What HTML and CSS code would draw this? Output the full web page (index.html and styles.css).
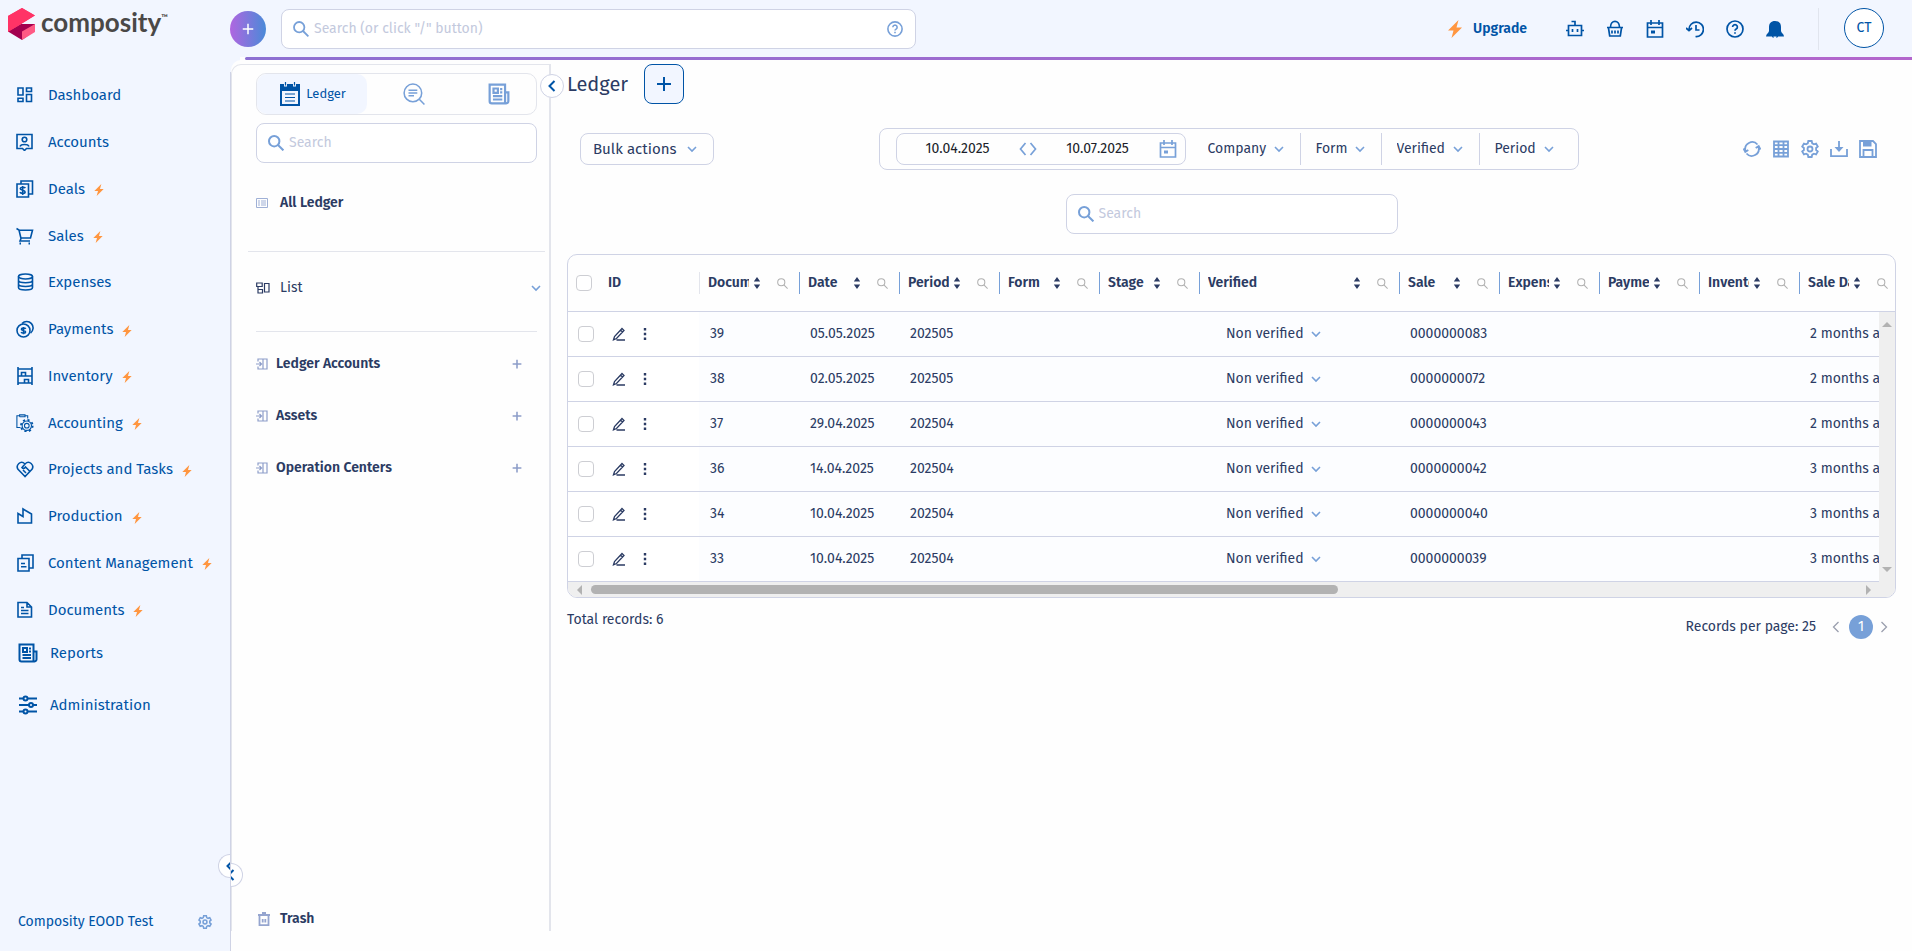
FILE: index.html
```html
<!DOCTYPE html>
<html lang="en">
<head>
    <meta charset="UTF-8">
    <meta name="viewport" content="width=device-width, initial-scale=1.0">
    <title>Ledger - Composity</title>
    <link rel="stylesheet" href="styles.css">
</head>
<body>
    <!-- Icon sprite -->
    <svg class="sprite" aria-hidden="true">
        <symbol id="i-search" viewBox="0 0 16 16"><circle cx="6.2" cy="6.2" r="5.2"/><path d="M10 10l5.4 5.4"/></symbol>
        <symbol id="i-plus" viewBox="0 0 16 16"><path d="M8 1v14M1 8h14"/></symbol>
        <symbol id="i-left" viewBox="0 0 16 16"><path d="M10.5 3L5.5 8l5 5"/></symbol>
        <symbol id="i-right" viewBox="0 0 16 16"><path d="M5.5 3l5 5-5 5"/></symbol>
        <symbol id="i-bolt" viewBox="0 0 16 18"><path d="M11.5 0L1 10.5h5.5L4.5 18 15 7.5H9.5z" fill="#ff9640" stroke="none"/></symbol>
        <symbol id="i-help" viewBox="0 0 18 18"><circle cx="9" cy="9" r="8"/><path d="M6.6 7a2.4 2.4 0 1 1 3.6 2.1c-.9.5-1.2.8-1.2 1.7M9 12.2v1.6"/></symbol>
        <symbol id="i-dashboard" viewBox="0 0 18 18"><path d="M2 2h5v7H2zM10.500 2h5v3.500h-5zM10.500 8.500h5v7h-5zM2 12.200h5v3.300H2z"/></symbol>
        <symbol id="i-accounts" viewBox="0 0 18 18"><path d="M1 1.500h15v14h-5.500l-2 2-2-2H1z"/><circle cx="8.500" cy="6.500" r="2.300"/><path d="M4 13.500c1-2.600 8-2.600 9 0"/></symbol>
        <symbol id="i-deals" viewBox="0 0 18 18"><path d="M5 4V1h11.500v13H13M1 4h11.500v13H1z"/><path d="M9.300 8.200c-.7-1.400-5-1.300-5 .6 0 1.900 4.800 1.200 4.800 3.200 0 1.900-4.400 1.800-5.200.2M6.700 6v9"/></symbol>
        <symbol id="i-cart" viewBox="0 0 18 18"><path d="M.500 1.500l2.500 1.500 2 8.500-1 2.500H14M3.200 3.300H16.500l-2 7.700H4.900"/><path d="M3.500 16.500H5M12.500 16.500H14" stroke-width="2"/></symbol>
        <symbol id="i-coins" viewBox="0 0 18 18"><ellipse cx="9.500" cy="3.500" rx="7" ry="2.500"/><path d="M2.500 3.500v11c0 3.300 14 3.300 14 0v-11M2.500 7.200c0 3.300 14 3.300 14 0M2.500 11c0 3.300 14 3.300 14 0"/></symbol>
        <symbol id="i-payments" viewBox="0 0 18 18"><circle cx="7.500" cy="10.500" r="6.500"/><path d="M6 3.500A6.400 6.400 0 1 1 14.500 13M9.700 8.800c-.6-1.200-4.300-1.100-4.300.4 0 1.600 4.200 1.100 4.200 2.700s-3.800 1.500-4.500.2M7.500 7v7.200"/></symbol>
        <symbol id="i-inventory" viewBox="0 0 18 18"><path d="M2 0v18M16 0v18M2 2h14M2 9h14M2 16h14M5.500 9V5.500h4V9M8.500 16v-3.500h4V16"/></symbol>
        <symbol id="i-gear" viewBox="0 0 18 18"><path d="M7.300 1h3.400l.5 2.300 1.700 1 2.200-.8 1.700 3L15.100 8v2l1.700 1.500-1.700 3-2.200-.8-1.700 1-.5 2.300H7.300l-.5-2.300-1.700-1-2.200.8-1.700-3L2.900 10V8L1.200 6.500l1.700-3 2.200.8 1.700-1z"/><circle cx="9" cy="9" r="2.500"/></symbol>
        <symbol id="i-accounting" viewBox="0 0 20 20"><path d="M5 15H1V2h3M4 3V1h6v2H4M10 2h3v3"/><circle cx="12" cy="13" r="5.200"/><circle cx="12" cy="13" r="2.600"/><circle cx="12" cy="13" r="6.500" stroke-width="2" stroke-dasharray="2.400 2.700"/></symbol>
        <symbol id="i-heart" viewBox="0 0 18 18"><path d="M9 16.500L2 9.200C-.5 5.500 4.500-.5 9 4c4.500-4.500 9.500 1.500 7 5.200zM9 4L6 7.500c1 1.500 2.500 1 3.500-.500l4 4M7 10l3 3"/></symbol>
        <symbol id="i-factory" viewBox="0 0 18 18"><path d="M2 6.500l5 3V2l8.500 5v9H2z"/></symbol>
        <symbol id="i-content" viewBox="0 0 18 18"><path d="M6 4V1h11v13h-3.500M2 4.500h11V17H2zM5 9.500h4M5 12.800h5.500"/></symbol>
        <symbol id="i-doc" viewBox="0 0 18 18"><path d="M2 1.500h9l4.500 4.500v10H2zM11 1.500V6h4.500M5 6.500h3M5 9.500h7.500M5 12.500h7.500"/></symbol>
        <symbol id="i-news" viewBox="0 0 20 20"><path d="M1.500 1.500h14V18.500H3.500a2 2 0 0 1-2-2zM15.500 8.500h3v8a2 2 0 0 1-3 1.700M5 5h4v4H5zM11 5.500h2M11 8.500h2M4.500 12h8.500M4.500 15h8.500"/></symbol>
        <symbol id="i-sliders" viewBox="0 0 20 20"><path d="M1 3.500h4.500M9.500 3.500H19M1 10h10M15 10h4M1 16.500h4.500M9.500 16.500H19"/><circle cx="7.500" cy="3.500" r="2"/><circle cx="13" cy="10" r="2"/><circle cx="7.500" cy="16.500" r="2"/></symbol>
        <symbol id="i-notepad" viewBox="0 0 20 24"><path d="M0 2h4v2.500h3V2h6v2.500h3V2h4v22H0zM2 9v13h16V9z" fill="currentColor" fill-rule="evenodd" stroke="none"/><path d="M5.500 0v3.500M14.500 0v3.500M5 12h10M5 15.500h10M5 19h10"/></symbol>
        <symbol id="i-find" viewBox="0 0 20 20"><circle cx="9" cy="9" r="8"/><path d="M14.800 14.800L19.500 19.500M5 6.500h8M5 9h8M5 11.500h5"/></symbol>
        <symbol id="i-table" viewBox="0 0 12 10"><path d="M.500.500h11v9H.500zM2 3h2M5 3h5M2 5h2M5 5h5M2 7h2M5 7h5"/></symbol>
        <symbol id="i-board" viewBox="0 0 14 12"><path d="M.700 1h5.500v3.500H.700zM8.500 1.500h4.500v8.500H8.500zM2 7.500h4.500V11H2zM2 4.500v3"/></symbol>
        <symbol id="i-enter" viewBox="0 0 12 12"><path d="M2 3.500V1h5v10H2V8.500M0 6h5M3.500 4L5.500 6 3.500 8M7 1h4v10H7"/></symbol>
        <symbol id="i-trash" viewBox="0 0 14 14"><path d="M1 3h12M5 1h4M2.500 3.500v9.700h9V3.500M5.700 7v3.500M8.300 7v3.500" stroke-width="1.800"/></symbol>
        <symbol id="i-robot" viewBox="0 0 18 18"><path d="M2.500 5.500h13v10h-13zM9 5.500v-4H5.500M0 10.500h2.500M15.500 10.500H18M6.500 9v3M11.500 9v3"/></symbol>
        <symbol id="i-basket" viewBox="0 0 18 18"><path d="M1 7.500h16M2.500 8l1.200 8h10.600l1.200-8M4.500 7C4.500-.5 13.500-.5 13.500 7M6 10.500v3M9 10.500v3M12 10.500v3"/></symbol>
        <symbol id="i-calendar" viewBox="0 0 18 18"><path d="M1.500 3h15v14h-15zM1.500 7.500h15M5 0v5M13 0v5"/><path d="M5 10.500h4v3H5z" fill="currentColor" stroke="none"/></symbol>
        <symbol id="i-history" viewBox="0 0 18 18"><path d="M3 9.500a7.200 7.200 0 1 1 6.500 7M0 8l3 2.700L6 8M10 5v5h3.500"/></symbol>
        <symbol id="i-bell" viewBox="0 0 18 18"><path d="M9 1c4 0 6 2.500 6 6v4c0 1.500 3 3 3 5.500H0C0 14 3 12.500 3 11V7c0-3.500 2-6 6-6zM5.500 16h2v2.500zM10.500 16h2l-2 2.500z" fill="currentColor" stroke="none"/></symbol>
        <symbol id="i-refresh" viewBox="0 0 18 18"><path d="M2.500 11A7 7 0 0 1 14.500 4.500M15.500 7A7 7 0 0 1 3.500 13.500M.500 8.500L2.300 12l3-2M17.500 9.500L15.700 6l-3 2"/></symbol>
        <symbol id="i-grid" viewBox="0 0 18 18"><path d="M2 1.500h14v15H2zM6.500 1.500v15M11.500 1.500v15M2 5.200h14M2 9h14M2 12.800h14"/></symbol>
        <symbol id="i-download" viewBox="0 0 18 18"><path d="M9 1v8M1 9v7.200h16V9"/><path d="M4.500 7h9L9 12z" fill="currentColor" stroke="none"/></symbol>
        <symbol id="i-save" viewBox="0 0 18 18"><path d="M1 1h13l3 3v13H1zM4.500 17v-7h9v7"/><path d="M4 1h8.500v5.500H4z" fill="currentColor" stroke="none"/></symbol>
        <symbol id="i-swap" viewBox="0 0 18 14"><path d="M6.500 1L1.500 7l5 6M11.500 1l5 6-5 6"/></symbol>
        <symbol id="i-sort" viewBox="0 0 8 12"><path d="M4 0l3.200 4.500H.800zM4 12L.800 7.500h6.400z" fill="currentColor" stroke="none"/></symbol>
        <symbol id="i-pencil" viewBox="0 0 14 14"><path d="M1.500 12.800L2.500 9.500 10 1.500l2 2L4.500 11.500zM8.500 3l2 2M4.500 13h8.500"/></symbol>
        <symbol id="i-dots" viewBox="0 0 4 14"><path d="M.800 1h2.400v2.400H.800zM.800 5.800h2.400v2.400H.800zM.800 10.600h2.400V13H.800z" fill="currentColor" stroke="none"/></symbol>
    </svg>

    <header class="topbar">
        <a class="logo" href="#">
            <svg viewBox="0 0 28 32"><path d="M14 0l13 7.500-13 8L0 24V8z" fill="#ff3366"/><path d="M0 23.500l13-7.500 14 0v6.500L14 32z" fill="#a3004f"/><path d="M14 15.500l13-8v8.500H14z" fill="#f2f6ff"/><path d="M14 0l13 7.500-13 8L0 24V8z" fill="#ff3366"/><path d="M14 23.500l13-7.500v8L14 32z" fill="#ff5a85"/></svg>
            <span>composity</span><sup>™</sup>
        </a>
        <button class="create" aria-label="Create"><svg class="icon"><use href="#i-plus"/></svg></button>
        <label class="search-box main-search">
            <svg class="icon"><use href="#i-search"/></svg>
            <input type="text" placeholder="Search (or click &quot;/&quot; button)" aria-label="Search everywhere">
            <svg class="icon"><use href="#i-help"/></svg>
        </label>
        <div class="top-actions">
            <a class="upgrade" href="#"><svg class="icon"><use href="#i-bolt"/></svg>Upgrade</a>
            <nav class="top-icons">
                <button aria-label="Assistant"><svg class="icon"><use href="#i-robot"/></svg></button>
                <button aria-label="Basket"><svg class="icon"><use href="#i-basket"/></svg></button>
                <button aria-label="Calendar"><svg class="icon"><use href="#i-calendar"/></svg></button>
                <button aria-label="History"><svg class="icon"><use href="#i-history"/></svg></button>
                <button aria-label="Help"><svg class="icon"><use href="#i-help"/></svg></button>
                <button aria-label="Notifications"><svg class="icon"><use href="#i-bell"/></svg></button>
            </nav>
            <div class="profile"><button class="avatar">CT</button></div>
        </div>
    </header>

    <div class="layout">
        <aside class="sidebar">
            <nav class="menu">
                <a href="#"><svg class="icon"><use href="#i-dashboard"/></svg>Dashboard</a>
                <a href="#"><svg class="icon"><use href="#i-accounts"/></svg>Accounts</a>
                <a href="#"><svg class="icon"><use href="#i-deals"/></svg>Deals<svg class="bolt"><use href="#i-bolt"/></svg></a>
                <a href="#"><svg class="icon"><use href="#i-cart"/></svg>Sales<svg class="bolt"><use href="#i-bolt"/></svg></a>
                <a href="#"><svg class="icon"><use href="#i-coins"/></svg>Expenses</a>
                <a href="#"><svg class="icon"><use href="#i-payments"/></svg>Payments<svg class="bolt"><use href="#i-bolt"/></svg></a>
                <a href="#"><svg class="icon"><use href="#i-inventory"/></svg>Inventory<svg class="bolt"><use href="#i-bolt"/></svg></a>
                <a href="#"><svg class="icon thin"><use href="#i-accounting"/></svg>Accounting<svg class="bolt"><use href="#i-bolt"/></svg></a>
                <a href="#"><svg class="icon"><use href="#i-heart"/></svg>Projects and Tasks<svg class="bolt"><use href="#i-bolt"/></svg></a>
                <a href="#"><svg class="icon"><use href="#i-factory"/></svg>Production<svg class="bolt"><use href="#i-bolt"/></svg></a>
                <a href="#"><svg class="icon"><use href="#i-content"/></svg>Content Management<svg class="bolt"><use href="#i-bolt"/></svg></a>
                <a href="#"><svg class="icon"><use href="#i-doc"/></svg>Documents<svg class="bolt"><use href="#i-bolt"/></svg></a>
            </nav>
            <nav class="menu menu-extra">
                <a href="#"><svg class="icon"><use href="#i-news"/></svg>Reports</a>
                <a href="#"><svg class="icon"><use href="#i-sliders"/></svg>Administration</a>
            </nav>
            <div class="company">
                <a href="#">Composity EOOD Test</a>
                <button aria-label="Company settings"><svg class="icon"><use href="#i-gear"/></svg></button>
            </div>
            <button class="half half-left" aria-label="Collapse menu"><svg class="icon"><use href="#i-left"/></svg></button>
        </aside>

        <section class="panel">
            <button class="half half-right" aria-label="Collapse sidebar"><svg class="icon"><use href="#i-left"/></svg></button>
            <button class="collapse" aria-label="Hide panel"><svg class="icon"><use href="#i-left"/></svg></button>
            <div class="tabs">
                <button class="active"><svg class="icon"><use href="#i-notepad"/></svg>Ledger</button>
                <button aria-label="Queries"><svg class="icon"><use href="#i-find"/></svg></button>
                <button aria-label="Reports"><svg class="icon"><use href="#i-news"/></svg></button>
            </div>
            <label class="search-box">
                <svg class="icon"><use href="#i-search"/></svg>
                <input type="text" placeholder="Search" aria-label="Search panel">
            </label>
            <a class="all-ledger" href="#"><svg class="icon"><use href="#i-table"/></svg>All Ledger</a>
            <button class="list-toggle"><svg class="icon"><use href="#i-board"/></svg>List<span class="chevron"></span></button>
            <ul class="groups">
                <li><svg class="icon"><use href="#i-enter"/></svg><a href="#">Ledger Accounts</a><button aria-label="Add ledger account"><svg class="icon"><use href="#i-plus"/></svg></button></li>
                <li><svg class="icon"><use href="#i-enter"/></svg><a href="#">Assets</a><button aria-label="Add asset"><svg class="icon"><use href="#i-plus"/></svg></button></li>
                <li><svg class="icon"><use href="#i-enter"/></svg><a href="#">Operation Centers</a><button aria-label="Add operation center"><svg class="icon"><use href="#i-plus"/></svg></button></li>
            </ul>
            <a class="trash" href="#"><svg class="icon"><use href="#i-trash"/></svg>Trash</a>
        </section>

        <main class="content">
            <div class="title">
                <h1>Ledger</h1>
                <button aria-label="Add record"><svg class="icon"><use href="#i-plus"/></svg></button>
            </div>

            <div class="toolbar">
                <div class="bulk"><select aria-label="Bulk actions"><option>Bulk actions</option></select></div>
                <div class="filters">
                    <div class="dates">
                        <input type="text" value="10.04.2025" aria-label="From date">
                        <svg class="icon"><use href="#i-swap"/></svg>
                        <input type="text" value="10.07.2025" aria-label="To date">
                        <svg class="icon"><use href="#i-calendar"/></svg>
                    </div>
                    <select aria-label="Company"><option>Company</option></select>
                    <select aria-label="Form"><option>Form</option></select>
                    <select aria-label="Verified"><option>Verified</option></select>
                    <select aria-label="Period"><option>Period</option></select>
                </div>
                <div class="tools">
                    <button aria-label="Refresh"><svg class="icon"><use href="#i-refresh"/></svg></button>
                    <button aria-label="Columns"><svg class="icon"><use href="#i-grid"/></svg></button>
                    <button aria-label="Settings"><svg class="icon"><use href="#i-gear"/></svg></button>
                    <button aria-label="Download"><svg class="icon"><use href="#i-download"/></svg></button>
                    <button aria-label="Save"><svg class="icon"><use href="#i-save"/></svg></button>
                </div>
            </div>

            <label class="search-box table-search">
                <svg class="icon"><use href="#i-search"/></svg>
                <input type="text" placeholder="Search" aria-label="Search ledger">
            </label>

            <div class="grid">
                <div class="grid-view">
                    <table>
                        <colgroup id="cols"></colgroup>
                        <thead><tr id="head"></tr></thead>
                        <tbody id="rows"></tbody>
                    </table>
                    <div class="scroll-y"><i class="arrow up"></i><i class="arrow down"></i></div>
                </div>
                <div class="scroll-x"><i class="arrow left"></i><div class="track"><div class="thumb"></div></div><i class="arrow right"></i></div>
            </div>

            <footer class="grid-footer">
                <span>Total records: 6</span>
                <div class="pager">
                    <span>Records per page: 25</span>
                    <button aria-label="Previous page"><svg class="icon"><use href="#i-left"/></svg></button>
                    <button class="current">1</button>
                    <button aria-label="Next page"><svg class="icon"><use href="#i-right"/></svg></button>
                </div>
            </footer>
        </main>
    </div>

    <script>
        const columns = ['Document', 'Date', 'Period', 'Form', 'Stage', 'Verified', 'Sale', 'Expense', 'Payment', 'Inventory', 'Sale Date'];
        const records = [
            ['39', '05.05.2025', '202505', '0000000083', '2 months ago'],
            ['38', '02.05.2025', '202505', '0000000072', '2 months ago'],
            ['37', '29.04.2025', '202504', '0000000043', '2 months ago'],
            ['36', '14.04.2025', '202504', '0000000042', '3 months ago'],
            ['34', '10.04.2025', '202504', '0000000040', '3 months ago'],
            ['33', '10.04.2025', '202504', '0000000039', '3 months ago']
        ];
        const icon = (name) => `<svg class="icon ${name}"><use href="#i-${name}"/></svg>`;

        document.getElementById('cols').innerHTML = '<col class="col-id">' +
            columns.map(c => `<col${c === 'Verified' ? ' class="col-wide"' : ''}>`).join('');

        document.getElementById('head').innerHTML =
            '<th><div class="th"><input type="checkbox" aria-label="Select all"><span>ID</span></div></th>' +
            columns.map(c => `<th><div class="th"><span>${c}</span>${icon('sort')}${icon('search')}</div></th>`).join('');

        document.getElementById('rows').innerHTML = records.map(([id, date, period, sale, age]) => `
            <tr>
                <td><div class="row-actions">
                    <input type="checkbox" aria-label="Select ${id}">
                    <button aria-label="Edit ${id}">${icon('pencil')}</button>
                    <button aria-label="More ${id}">${icon('dots')}</button>
                </div></td>
                <td>${id}</td><td>${date}</td><td>${period}</td><td></td><td></td>
                <td><select aria-label="Status ${id}"><option>Non verified</option></select></td>
                <td>${sale}</td><td></td><td></td><td></td><td>${age}</td>
            </tr>`).join('');
    </script>
</body>
</html>
```
FILE: styles.css
```css
* {
    margin: 0;
    padding: 0;
    box-sizing: border-box;
}

body {
    font-family: 'Fira Sans', Roboto, 'Noto Sans', sans-serif;
    font-size: 14px;
    line-height: 20px;
    color: #2b3b63;
    background-color: #f2f6ff;
    min-height: 100vh;
    display: flex;
    flex-direction: column;
}

a {
    color: inherit;
    text-decoration: none;
}

button,
input,
select {
    font: inherit;
    color: inherit;
    background: none;
    border: none;
    outline: none;
}

button,
select {
    cursor: pointer;
}

button {
    display: flex;
    align-items: center;
    justify-content: center;
}

.sprite {
    position: absolute;
    width: 0;
    height: 0;
}

.icon {
    width: 18px;
    height: 18px;
    flex: none;
    fill: none;
    stroke: currentColor;
    stroke-width: 2;
}

/* Drop-downs share one small chevron */
select,
.chevron {
    appearance: none;
    background: url("data:image/svg+xml,%3Csvg xmlns='http://www.w3.org/2000/svg' width='10' height='8'%3E%3Cpath d='M1 2l4 4 4-4' fill='none' stroke='%2377a0d8' stroke-width='1.600'/%3E%3C/svg%3E") no-repeat right center;
}

select {
    padding-right: 17px;
}

.chevron {
    width: 10px;
    height: 10px;
}

input[type="checkbox"] {
    appearance: none;
    width: 16px;
    height: 16px;
    flex: none;
    border: 1px solid #cdced3;
    border-radius: 4px;
    background-color: #fff;
}

.search-box {
    display: flex;
    align-items: center;
    gap: 5px;
    height: 40px;
    padding: 0 12px 0 11px;
    border: 1px solid #cfd3e5;
    border-radius: 8px;
    background-color: #fff;
    color: #77a0d8;
}

.search-box .icon {
    width: 16px;
    height: 16px;
}

.search-box input {
    flex: 1;
    min-width: 0;
    color: #2b3b63;
}

.search-box input::placeholder {
    color: #c3c9dd;
}

/* Top bar */
.topbar {
    display: flex;
    align-items: center;
    height: 57px;
    padding-right: 28px;
    color: #0054a6;
}

.logo {
    display: flex;
    align-items: flex-start;
    width: 230px;
    height: 57px;
    padding: 8px 0 0 8px;
    color: #4a4847;
    font-family: Lato, sans-serif;
    font-size: 26px;
    font-weight: bold;
    line-height: 28px;
}

.logo svg {
    width: 28px;
    height: 32px;
    margin-right: 5px;
}

.logo sup {
    font-size: 9px;
    line-height: 20px;
}

.create {
    width: 36px;
    height: 36px;
    border-radius: 50%;
    background: linear-gradient(90deg, #b066e0, #4a8ad8);
    color: #fff;
}

.create .icon {
    width: 12px;
    height: 12px;
}

.main-search {
    width: 635px;
    margin-left: 15px;
}

.main-search .icon {
    stroke-width: 1.800;
}

.top-actions {
    display: flex;
    align-items: center;
    margin-left: auto;
}

.upgrade {
    display: flex;
    align-items: center;
    gap: 9px;
    font-weight: 600;
}

.top-icons {
    display: flex;
    gap: 22px;
    margin: 0 34px 0 39px;
}

.top-icons .icon {
    stroke-width: 1.700;
}

.profile {
    height: 42px;
    padding-left: 25px;
    border-left: 1px solid #e1e5ee;
}

.avatar {
    width: 40px;
    height: 40px;
    border: 1px solid #0054a6;
    border-radius: 50%;
    background-color: #fff;
}

/* Page body */
.layout {
    position: relative;
    flex: 1;
    display: flex;
    min-width: 0;
    background: linear-gradient(90deg, #f2f6ff 240px, #fefefe 240px);
}

.layout::before {
    content: "";
    position: absolute;
    top: 0;
    left: 245px;
    right: 0;
    height: 3px;
    border-radius: 2px 0 0 2px;
    background: linear-gradient(90deg, #8d70d2, #b366cc);
}

.sidebar {
    position: relative;
    width: 231px;
    flex: none;
    display: flex;
    flex-direction: column;
    margin-top: 15px;
    padding-bottom: 19px;
    border-right: 1px solid #cfd3e5;
    color: #0054a6;
}

.menu {
    display: flex;
    flex-direction: column;
    height: 561px;
}

.menu a {
    flex: 1;
    display: flex;
    align-items: center;
    padding-left: 16px;
    font-size: 15px;
}

.menu .icon {
    margin-right: 14px;
    stroke-width: 1.600;
}

.menu .thin {
    stroke-width: 1.200;
}

.menu .bolt {
    width: 12px;
    height: 12px;
    margin: 3px 0 0 8px;
}

.menu-extra {
    height: 104px;
    margin-top: -6px;
}

.menu-extra a {
    padding-left: 18px;
}

.menu-extra .icon {
    width: 20px;
    height: 20px;
    margin-right: 12px;
    stroke-width: 2;
}

.company {
    display: flex;
    align-items: center;
    justify-content: space-between;
    margin-top: auto;
    padding: 0 18px;
}

.company .icon {
    width: 14px;
    height: 14px;
    color: #77a0d8;
}

/* Collapse handles */
.half,
.collapse {
    position: absolute;
    z-index: 2;
    height: 24px;
    border: 1px solid #cfd3e5;
    background-color: #fff;
    color: #0054a6;
    overflow: hidden;
}

.half .icon,
.collapse .icon {
    width: 16px;
    height: 16px;
}

.half {
    width: 12px;
}

.half-left {
    right: 0;
    bottom: 73px;
    border-right: none;
    border-radius: 12px 0 0 12px;
    justify-content: flex-start;
    padding-left: 3px;
}

.half-right {
    left: 0;
    bottom: 64px;
    border-left: none;
    border-radius: 0 12px 12px 0;
    justify-content: flex-end;
    padding-right: 3px;
}

.collapse {
    top: 14px;
    right: -13px;
    width: 24px;
    border-radius: 50%;
}

/* Ledger panel */
.panel {
    position: relative;
    width: 320px;
    flex: none;
    display: flex;
    flex-direction: column;
    margin-top: 3px;
    padding: 13px 14px 22px 25px;
    border-top-left-radius: 10px;
    background-color: #fefefe;
}

/* Frame of the panel stops short of the window's bottom edge */
.panel::before {
    content: "";
    position: absolute;
    inset: 4px 0 20px 0;
    border: 1px solid #e3e5ec;
    border-right-width: 2px;
    border-bottom: none;
    border-top-left-radius: 10px;
    pointer-events: none;
}

.tabs {
    display: flex;
    height: 42px;
    margin-bottom: 8px;
    border: 1px solid #e3e5ec;
    border-radius: 10px;
}

.tabs button {
    flex: 1;
    padding-left: 10px;
    color: #77a0d8;
}

.tabs .active {
    flex: none;
    width: 110px;
    gap: 6px;
    padding-left: 2px;
    border-radius: 10px;
    background-color: #f2f6ff;
    color: #0054a6;
    font-size: 13px;
}

.tabs .icon {
    width: 22px;
    height: 22px;
    stroke-width: 1.400;
}

.tabs .active .icon {
    width: 20px;
    height: 24px;
    stroke-width: 1.200;
}

.tabs button:last-child .icon {
    stroke-width: 2;
}

.all-ledger,
.list-toggle,
.trash {
    display: flex;
    align-items: center;
    justify-content: flex-start;
    gap: 12px;
}

.all-ledger,
.trash,
.groups a {
    font-weight: 600;
}

.all-ledger {
    height: 89px;
    margin: 0 -8px;
    padding: 0 0 9px 8px;
    border-bottom: 1px solid #e3e5ec;
}

.all-ledger .icon {
    width: 12px;
    height: 10px;
    stroke-width: 1;
    color: #9fb0d6;
}

.list-toggle {
    height: 80px;
    padding-bottom: 8px;
    gap: 10px;
    border-bottom: 1px solid #e3e5ec;
}

.list-toggle .icon {
    width: 14px;
    height: 12px;
    stroke-width: 1.200;
}

.list-toggle .chevron {
    margin: 0 -4px 0 auto;
}

.groups {
    list-style: none;
    padding-top: 6px;
}

.groups li {
    display: flex;
    align-items: center;
    gap: 8px;
    height: 52px;
}

.groups .icon {
    width: 12px;
    height: 12px;
    stroke-width: 1.200;
    color: #8d9dc9;
}

.groups button {
    margin: 0 15px 0 auto;
}

.groups button .icon {
    width: 10px;
    height: 10px;
    stroke-width: 2.500;
}

.trash {
    margin-top: auto;
    padding-left: 1px;
    gap: 9px;
}

.trash .icon {
    width: 14px;
    height: 14px;
    color: #95a5cf;
}

/* Main area */
.content {
    flex: 1;
    min-width: 0;
    margin-top: 3px;
    padding: 4px 16px 20px 16px;
    background-color: #fefefe;
}

.title {
    display: flex;
    align-items: center;
    gap: 16px;
}

.title h1 {
    font-size: 20px;
    font-weight: 400;
}

.title button {
    width: 40px;
    height: 40px;
    border: 1px solid #0054a6;
    border-radius: 8px;
    background-color: #f2f6ff;
    color: #0054a6;
}

.title button .icon {
    width: 16px;
    height: 16px;
}

.toolbar {
    display: grid;
    grid-template-columns: 1fr auto 1fr;
    align-items: center;
    margin-top: 24px;
    padding: 0 19px 0 13px;
}

.bulk select {
    height: 32px;
    padding: 0 36px 0 12px;
    border: 1px solid #cfd3e5;
    border-radius: 8px;
    background-position: right 16px center;
    font-size: 15px;
}

.filters {
    display: flex;
    align-items: center;
    height: 42px;
    padding: 0 8px 0 16px;
    border: 1px solid #cfd3e5;
    border-radius: 8px;
}

.dates {
    display: flex;
    align-items: center;
    width: 290px;
    height: 32px;
    margin-right: 7px;
    padding-right: 8px;
    border: 1px solid #cfd3e5;
    border-radius: 8px;
    color: #77a0d8;
}

.dates input {
    flex: 1;
    min-width: 0;
    color: #1c1f2b;
    text-align: center;
}

.dates .icon {
    stroke-width: 1.700;
}

.filters select {
    height: 32px;
    padding: 0 33px 0 15px;
    background-position: right 16px center;
}

.filters select + select {
    border-left: 1px solid #cfd3e5;
}

.tools {
    display: flex;
    justify-content: flex-end;
    gap: 11px;
    color: #77a0d8;
}

.tools .icon {
    stroke-width: 1.800;
}

.table-search {
    width: 332px;
    margin: 24px auto 20px;
}

/* Data grid */
.grid {
    border: 1px solid #cfd3e5;
    border-radius: 10px;
    overflow: hidden;
}

.grid-view {
    position: relative;
    overflow: hidden;
}

.grid table {
    width: 1331px;
    table-layout: fixed;
    border-collapse: separate;
    border-spacing: 0;
}

.col-id {
    width: 131px;
}

.col-wide {
    width: 200px;
}

.grid th {
    height: 57px;
    border-bottom: 1px solid #cfd3e5;
    text-align: left;
    font-weight: 600;
}

.th {
    display: flex;
    align-items: center;
    height: 22px;
    padding: 0 11px 0 8px;
    border-left: 1px solid #77a0d8;
}

.grid th:first-child .th {
    gap: 16px;
    border-left: none;
}

.grid th:nth-child(2) .th {
    border-left-color: #e3e5ec;
}

.th span {
    flex: 1;
    overflow: hidden;
    white-space: nowrap;
}

.th .sort {
    width: 8px;
    height: 12px;
    margin: 0 16px 0 4px;
}

.th .search {
    width: 11px;
    height: 11px;
    color: #b0b0b0;
    stroke-width: 1.500;
}

.grid td {
    height: 45px;
    padding-left: 11px;
    border-bottom: 1px solid #cfd3e5;
    background-color: #fcfdff;
    white-space: nowrap;
}

.grid td:first-child {
    padding-left: 10px;
    background-color: #fff;
}

.grid td select {
    margin-left: 16px;
}

.row-actions {
    display: flex;
    align-items: center;
}

.row-actions .pencil {
    width: 14px;
    height: 14px;
    margin: 0 17px 0 18px;
    stroke-width: 1.300;
}

.row-actions .dots {
    width: 4px;
    height: 14px;
}

.scroll-y {
    position: absolute;
    top: 57px;
    right: 0;
    bottom: 0;
    width: 16px;
    display: flex;
    flex-direction: column;
    align-items: center;
    justify-content: space-between;
    padding: 10px 0;
    background-color: #efefef;
}

.scroll-x {
    display: flex;
    align-items: center;
    gap: 9px;
    height: 15px;
    padding: 0 24px 0 9px;
    background-color: #efefef;
}

.track {
    flex: 1;
}

.thumb {
    width: 59%;
    height: 9px;
    border-radius: 5px;
    background-color: #b2b2b2;
}

.arrow {
    border: 5px solid transparent;
}

.up {
    border-top: none;
    border-bottom-color: #b2b2b2;
}

.down {
    border-bottom: none;
    border-top-color: #b2b2b2;
}

.left {
    border-left: none;
    border-right-color: #b2b2b2;
}

.right {
    border-right: none;
    border-left-color: #b2b2b2;
}

.grid-footer {
    display: flex;
    justify-content: space-between;
    padding-top: 12px;
}

.pager {
    display: flex;
    align-items: center;
    padding: 5px 4px 0 0;
    color: #9a9fae;
}

.pager span {
    margin-right: 12px;
    color: #2b3b63;
}

.pager .current {
    width: 24px;
    height: 24px;
    margin: 0 3px 0 5px;
    border-radius: 50%;
    background-color: #77a0d8;
    color: #fff;
}

.pager .icon {
    width: 16px;
    height: 16px;
    stroke-width: 1.300;
}
```
